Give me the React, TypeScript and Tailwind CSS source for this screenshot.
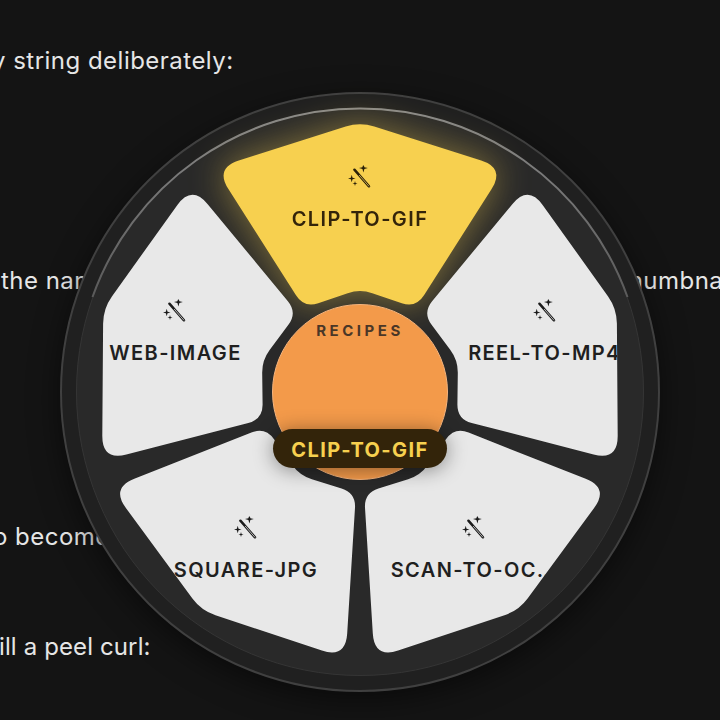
import React from "react";

type V = { x: number; y: number; d: number };
const BASE: V[] = [
  { x: 0, y: -270, d: 15 },
  { x: 145, y: -224, d: 25 },
  { x: 56, y: -84, d: 15 },
  { x: 0, y: -103, d: 13 },
  { x: -56, y: -84, d: 15 },
  { x: -145, y: -224, d: 25 },
];
const C = 300;

function rot(x: number, y: number, deg: number) {
  const a = (deg * Math.PI) / 180;
  return { x: C + x * Math.cos(a) - y * Math.sin(a), y: C + x * Math.sin(a) + y * Math.cos(a) };
}

function segPath(deg: number) {
  const pts = BASE.map((v) => ({ ...rot(v.x, v.y, deg), d: v.d }));
  const n = pts.length;
  let p = "";
  pts.forEach((v, i) => {
    const a = pts[(i - 1 + n) % n];
    const b = pts[(i + 1) % n];
    const la = Math.hypot(a.x - v.x, a.y - v.y);
    const lb = Math.hypot(b.x - v.x, b.y - v.y);
    const s = { x: v.x + ((a.x - v.x) * v.d) / la, y: v.y + ((a.y - v.y) * v.d) / la };
    const e = { x: v.x + ((b.x - v.x) * v.d) / lb, y: v.y + ((b.y - v.y) * v.d) / lb };
    p += `${i === 0 ? "M" : "L"}${s.x.toFixed(1)} ${s.y.toFixed(1)} Q${v.x.toFixed(1)} ${v.y.toFixed(1)} ${e.x.toFixed(1)} ${e.y.toFixed(1)} `;
  });
  return p + "Z";
}

function star(cx: number, cy: number, r: number) {
  const w = r * 0.22;
  return `M${cx} ${cy - r}L${cx + w} ${cy - w}L${cx + r} ${cy}L${cx + w} ${cy + w}L${cx} ${cy + r}L${cx - w} ${cy + w}L${cx - r} ${cy}L${cx - w} ${cy - w}Z`;
}

function Wand({ dark }: { dark: boolean }) {
  const c = dark ? "#2a2008" : "#1a1a1a";
  return (
    <svg width="24" height="24" viewBox="-12 -12 24 24" className="block">
      <path d="M-5.6 -7.8L9 8.8" stroke={c} strokeWidth="2.5" strokeLinecap="round" fill="none" />
      <path d="M-0.6 -2.2L8.8 8.6" stroke={dark ? "#c9a94a" : "#b5b5b5"} strokeWidth="1" strokeLinecap="round" fill="none" />
      <path d={star(3.4, -9.4, 4.4)} fill={c} />
      <path d={star(-8.3, 1, 3.8)} fill={c} />
      <path d={star(-5, 6, 2.6)} fill={c} />
    </svg>
  );
}

const SEGS = [
  { label: "WEB-IMAGE", deg: -72 },
  { label: "REEL-TO-MP4", deg: 72 },
  { label: "SQUARE-JPG", deg: -144 },
  { label: "SCAN-TO-OC…", deg: 144 },
];

function Segment({ label, deg, active }: { label: string; deg: number; active?: boolean }) {
  const pos = rot(0, -194, deg);
  return (
    <div
      className={`absolute inset-0 ${active ? "bg-[#f7d04f] text-[#33240a]" : "bg-[#e8e8e8] text-[#1f1f1f]"}`}
      style={{ clipPath: `path('${segPath(deg)}')` }}
    >
      <div
        className="absolute flex w-[170px] -translate-x-1/2 -translate-y-1/2 flex-col items-center gap-[17px]"
        style={{ left: pos.x, top: pos.y }}
      >
        <Wand dark={!!active} />
        <div className="w-full text-center text-[20px] leading-6 font-semibold tracking-[0.07em] whitespace-nowrap">{label}</div>
      </div>
    </div>
  );
}

export default function App() {
  return (
    <div className="relative h-[720px] w-[720px] overflow-hidden bg-[#141414] font-['Inter',sans-serif] text-[24px] leading-[34px] tracking-[0.02em] text-[#e6e6e6]">
      <div className="mt-[44px] -ml-[8px] whitespace-nowrap">y string deliberately:</div>
      <div className="mt-[186px] flex whitespace-nowrap">
        <span className="ml-[1px]">the name</span>
        <span className="ml-[510px]">thumbnail</span>
      </div>
      <div className="mt-[222px] -ml-[7px] whitespace-nowrap">o become</div>
      <div className="mt-[76px] -ml-[1px] whitespace-nowrap tracking-[0.005em]">ill a peel curl:</div>

      <div className="absolute top-[92px] left-[60px] h-[600px] w-[600px] rounded-full border-2 border-[#404040] bg-[#202020] shadow-[0_8px_30px_rgba(0,0,0,0.5)]">
        <div className="absolute top-[14px] left-[14px] h-[568px] w-[568px] rounded-full border border-[#353535] bg-[#292929]" />
        <svg width="600" height="600" viewBox="0 0 600 600" className="absolute -top-[2px] -left-[2px]">
          <defs>
            <linearGradient id="rim" x1="0" y1="16" x2="0" y2="206" gradientUnits="userSpaceOnUse">
              <stop offset="0" stopColor="#8a8a8a" />
              <stop offset="1" stopColor="#5a5a5a" />
            </linearGradient>
          </defs>
          <path d="M32.5 205A284 284 0 0 1 567.5 205" fill="none" stroke="url(#rim)" strokeWidth="2" />
        </svg>
        <div className="absolute -top-[2px] -left-[2px] h-[600px] w-[600px]">
          <div className="absolute inset-0 [filter:drop-shadow(0_0_18px_rgba(247,208,79,0.45))]">
            <Segment label="CLIP-TO-GIF" deg={0} active />
          </div>
          {SEGS.map((s) => (
            <Segment key={s.label} label={s.label} deg={s.deg} />
          ))}
          <div className="absolute top-[212px] left-[212px] flex h-[176px] w-[176px] flex-col items-center rounded-full border-[1.5px] border-[#f6b47c] bg-[#f39a4a] pt-[16px]">
            <div className="text-[15px] leading-5 font-bold tracking-[0.235em] text-[#4a3727]">RECIPES</div>
            <div className="absolute bottom-[11px] flex h-[39px] w-[174px] items-center justify-center rounded-[20px] bg-[#33240a] pt-[3px] text-[20px] font-bold tracking-[0.07em] text-[#f7d04f] shadow-[0_2px_20px_rgba(0,0,0,0.42)]">
              CLIP-TO-GIF
            </div>
          </div>
        </div>
      </div>
    </div>
  );
}
